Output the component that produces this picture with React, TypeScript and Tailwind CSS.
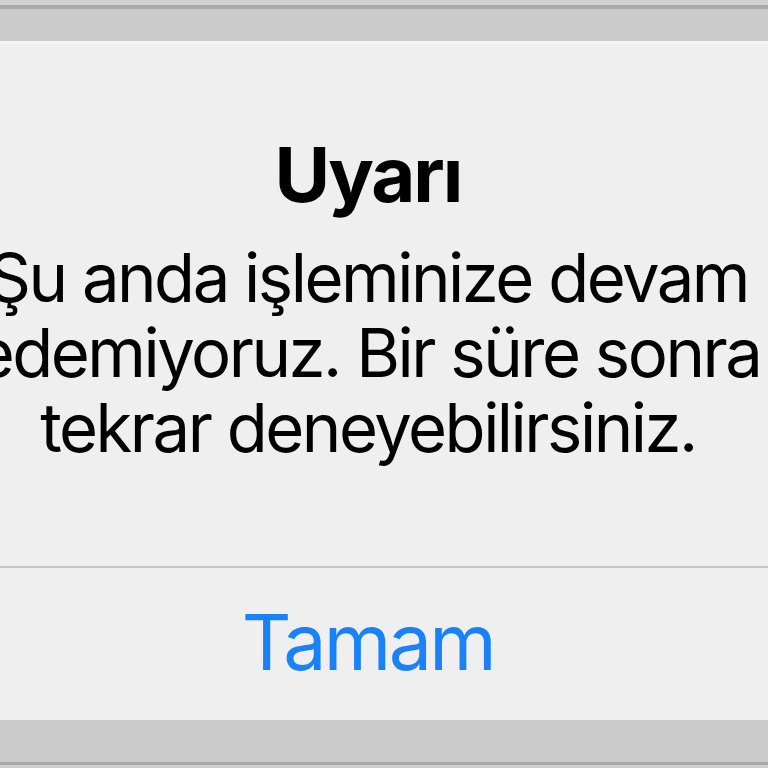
export default function App() {
  return (
    <div
      className="w-[768px] h-[768px] overflow-hidden bg-[#cbcbcb] flex flex-col"
      style={{ fontFamily: 'Inter, "Noto Sans", sans-serif' }}
    >
      {/* top frame */}
      <div className="h-[41px] flex flex-col shrink-0">
        <div className="h-[5px] bg-[#d2d2d2]" />
        <div className="h-[4px] bg-[#a9a9a9]" />
        <div className="flex-1 bg-[#cbcbcb]" />
      </div>

      {/* alert */}
      <div className="h-[679px] shrink-0 bg-[#efefef] flex flex-col border-t-[3px] border-[#f4f4f4]">
        <div className="h-[522px] flex flex-col items-center pr-[32px]">
          <h1 className="mt-[92px] text-[76px] leading-[76px] font-bold text-black tracking-[-2px]">
            Uyarı
          </h1>
          <p className="mt-[28px] text-[67px] leading-[75px] text-black text-center whitespace-nowrap tracking-[-2.5px]">
            Şu anda işleminize devam
            <br />
            edemiyoruz. Bir süre sonra
            <br />
            tekrar deneyebilirsiniz.
          </p>
        </div>
        <div className="h-[2px] bg-[#c6c6c6]" />
        <div className="flex-1 flex items-center justify-center pr-[32px]">
          <span className="text-[77px] leading-none text-[#1a82f8] tracking-[-2.6px] -mt-[4px]">
            Tamam
          </span>
        </div>
      </div>

      {/* bottom frame */}
      <div className="h-[42px] shrink-0 bg-[#cbcbcb]" />
      <div className="h-[3px] shrink-0 bg-[#a9a9a9]" />
      <div className="flex-1 bg-[#d0d0d0]" />
    </div>
  );
}
